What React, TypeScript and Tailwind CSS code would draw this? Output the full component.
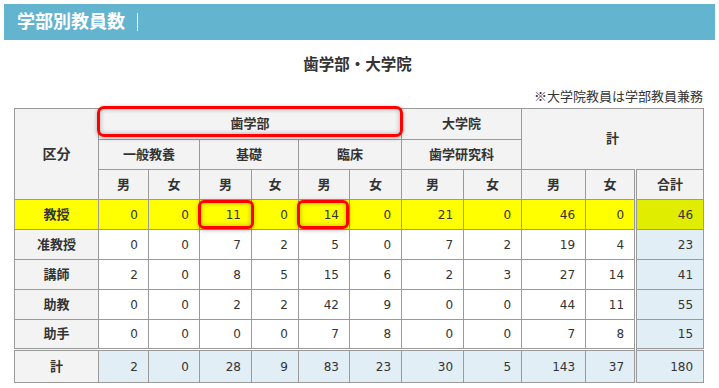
import React from "react";

const font = { fontFamily: '"DejaVu Sans", "Noto Sans CJK JP", sans-serif' };
const jp = { fontFamily: '"Noto Sans CJK JP", sans-serif' };

const rows: { label: string; vals: number[]; hl?: boolean }[] = [
  { label: "教授", vals: [0, 0, 11, 0, 14, 0, 21, 0, 46, 0, 46], hl: true },
  { label: "准教授", vals: [0, 0, 7, 2, 5, 0, 7, 2, 19, 4, 23] },
  { label: "講師", vals: [2, 0, 8, 5, 15, 6, 2, 3, 27, 14, 41] },
  { label: "助教", vals: [0, 0, 2, 2, 42, 9, 0, 0, 44, 11, 55] },
  { label: "助手", vals: [0, 0, 0, 0, 7, 8, 0, 0, 7, 8, 15] },
];
const total = [2, 0, 28, 9, 83, 23, 30, 5, 143, 37, 180];

const widths = [84, 50, 51, 52, 47, 51, 52, 62, 58, 64, 50, 68];

const th = "border border-[#9a9a9a] bg-[#f3f3f3] font-bold text-center text-[13px] text-[#333] p-0";
const td = "border border-[#9a9a9a] text-right pr-[10px] text-[12px] text-[#333] p-0 h-[30px]";

export default function App() {
  return (
    <div className="w-[719px] h-[388px] bg-white overflow-hidden" style={font}>
      <div className="mx-[4px] mt-[4px] h-[36px] bg-[#63b4cf] flex items-center pl-[13px]">
        <span className="text-white font-bold text-[18px] leading-none">学部別教員数</span>
        <span className="ml-[12px] w-px h-[18px] bg-white"></span>
      </div>
      <div className="text-center font-bold text-[15.5px] text-[#333] mt-[15px] leading-[20px] pr-[4px]">
        歯学部・大学院
      </div>
      <div className="text-right text-[13px] text-[#333] mt-[13px] leading-[16px] pr-[16px]" style={jp}>
        ※大学院教員は学部教員兼務
      </div>
      <div className="relative ml-[14px] mt-[4px] w-[689px]">
        <table className="table-fixed border-collapse w-[689px]">
          <colgroup>
            {widths.map((w, i) => (
              <col key={i} style={{ width: w }} />
            ))}
          </colgroup>
          <thead>
            <tr className="h-[31px]">
              <th rowSpan={3} className={th + " text-[14px]"}>区分</th>
              <th colSpan={6} className={th}>歯学部</th>
              <th colSpan={2} className={th}>大学院</th>
              <th colSpan={3} rowSpan={2} className={th}>計</th>
            </tr>
            <tr className="h-[30px]">
              <th colSpan={2} className={th}>一般教養</th>
              <th colSpan={2} className={th}>基礎</th>
              <th colSpan={2} className={th}>臨床</th>
              <th colSpan={2} className={th}>歯学研究科</th>
            </tr>
            <tr className="h-[30px]">
              {["男", "女", "男", "女", "男", "女", "男", "女", "男", "女"].map((s, i) => (
                <th key={i} className={th}>{s}</th>
              ))}
              <th className={th + " bg-[#e1eef6] border-l-[3px] border-l-[#9a9a9a] border-double"}>合計</th>
            </tr>
          </thead>
          <tbody>
            {rows.map((r) => (
              <tr key={r.label} className="h-[30px]">
                <th className={th + (r.hl ? " bg-[#ffff00]" : "")}>{r.label}</th>
                {r.vals.map((v, i) => {
                  const last = i === r.vals.length - 1;
                  let bg = r.hl ? "bg-[#ffff00]" : "bg-white";
                  if (last) bg = r.hl ? "bg-[#e0ec00]" : "bg-[#e1eef6]";
                  return (
                    <td
                      key={i}
                      className={
                        td + " " + bg + (last ? " border-l-[3px] border-double" : "")
                      }
                    >
                      {v}
                    </td>
                  );
                })}
              </tr>
            ))}
            <tr className="h-[33px]">
              <th className={th + " bg-[#e1eef6] border-t-[3px] border-double"}>計</th>
              {total.map((v, i) => (
                <td
                  key={i}
                  className={
                    td +
                    " bg-[#e1eef6] border-t-[3px] border-double" +
                    (i === total.length - 1 ? " border-l-[3px]" : "")
                  }
                >
                  {v}
                </td>
              ))}
            </tr>
          </tbody>
        </table>
        <div className="absolute left-[83px] top-[-2px] w-[306px] h-[31px] border-[3px] border-[#ff0000] rounded-[7px] shadow-[inset_0_0_5px_rgba(0,0,0,0.3),0_1px_4px_rgba(0,0,0,0.3)]"></div>
        <div className="absolute left-[184px] top-[92px] w-[56px] h-[29px] border-[3px] border-[#ff0000] rounded-[6px] shadow-[inset_0_0_5px_rgba(0,0,0,0.3),0_1px_4px_rgba(0,0,0,0.3)]"></div>
        <div className="absolute left-[283px] top-[92px] w-[52px] h-[29px] border-[3px] border-[#ff0000] rounded-[6px] shadow-[inset_0_0_5px_rgba(0,0,0,0.3),0_1px_4px_rgba(0,0,0,0.3)]"></div>
      </div>
    </div>
  );
}
